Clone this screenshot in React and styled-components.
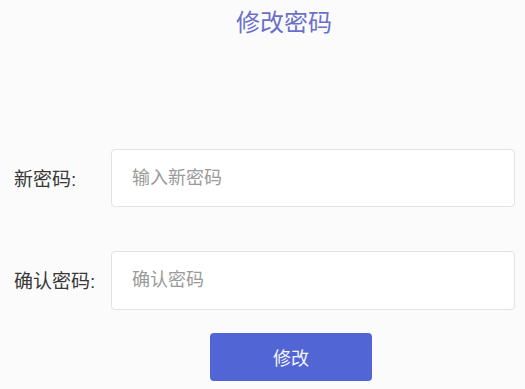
import React, { useState } from "react";
import styled, { createGlobalStyle } from "styled-components";

const GlobalStyle = createGlobalStyle`
    html, body {
        margin: 0;
        padding: 0;
        background: #fbfbfc;
    }
    body {
        font-family: "Liberation Sans", "Noto Sans CJK SC", sans-serif;
    }
`;

const Page = styled.div`
    width: 525px;
    height: 389px;
    box-sizing: border-box;
    padding: 6px 10px 0 14px;
    display: flex;
    flex-direction: column;
`;

const Title = styled.h2`
    margin: 0;
    padding-left: 39px;
    text-align: center;
    font-size: 24px;
    line-height: 34px;
    font-weight: 400;
    color: #6a70c9;
`;

const Form = styled.form`
    display: flex;
    flex-direction: column;
    margin-top: 109px;
`;

const Row = styled.div`
    display: flex;
    align-items: center;
    margin-bottom: ${(p) => p.gap}px;
`;

const Label = styled.label`
    width: 97px;
    flex: none;
    font-size: 19px;
    color: #383838;
    margin-top: -2px;
`;

const Input = styled.input`
    flex: 1;
    height: ${(p) => p.h}px;
    box-sizing: border-box;
    border: 1px solid #e3e3e6;
    border-radius: 4px;
    background: #fff;
    padding: 0 20px;
    font-family: "Liberation Sans", "Noto Sans CJK SC", sans-serif;
    font-size: 18px;
    color: #333;
    outline: none;
    &::placeholder {
        color: #9a9a9a;
    }
`;

const Actions = styled.div`
    display: flex;
    padding-left: 196px;
`;

const Button = styled.button`
    width: 162px;
    height: 48px;
    border: none;
    border-radius: 4px;
    background: #5265d5;
    color: #f4f5ff;
    font-family: "Liberation Sans", "Noto Sans CJK SC", sans-serif;
    font-size: 18px;
    cursor: pointer;
`;

const App = () => {
    const [pwd, setPwd] = useState("");
    const [confirm, setConfirm] = useState("");

    const handleSubmit = (e) => {
        e.preventDefault();
    };

    return (
        <>
            <GlobalStyle />
            <Page>
                <Title>修改密码</Title>
                <Form onSubmit={handleSubmit}>
                    <Row gap={44}>
                        <Label htmlFor="pwd">新密码:</Label>
                        <Input id="pwd" type="password" h={58} placeholder="输入新密码"
                            value={pwd} onChange={(e) => setPwd(e.target.value)} />
                    </Row>
                    <Row gap={23}>
                        <Label htmlFor="confirm">确认密码:</Label>
                        <Input id="confirm" type="password" h={59} placeholder="确认密码"
                            value={confirm} onChange={(e) => setConfirm(e.target.value)} />
                    </Row>
                    <Actions>
                        <Button type="submit">修改</Button>
                    </Actions>
                </Form>
            </Page>
        </>
    );
};

export default App;
